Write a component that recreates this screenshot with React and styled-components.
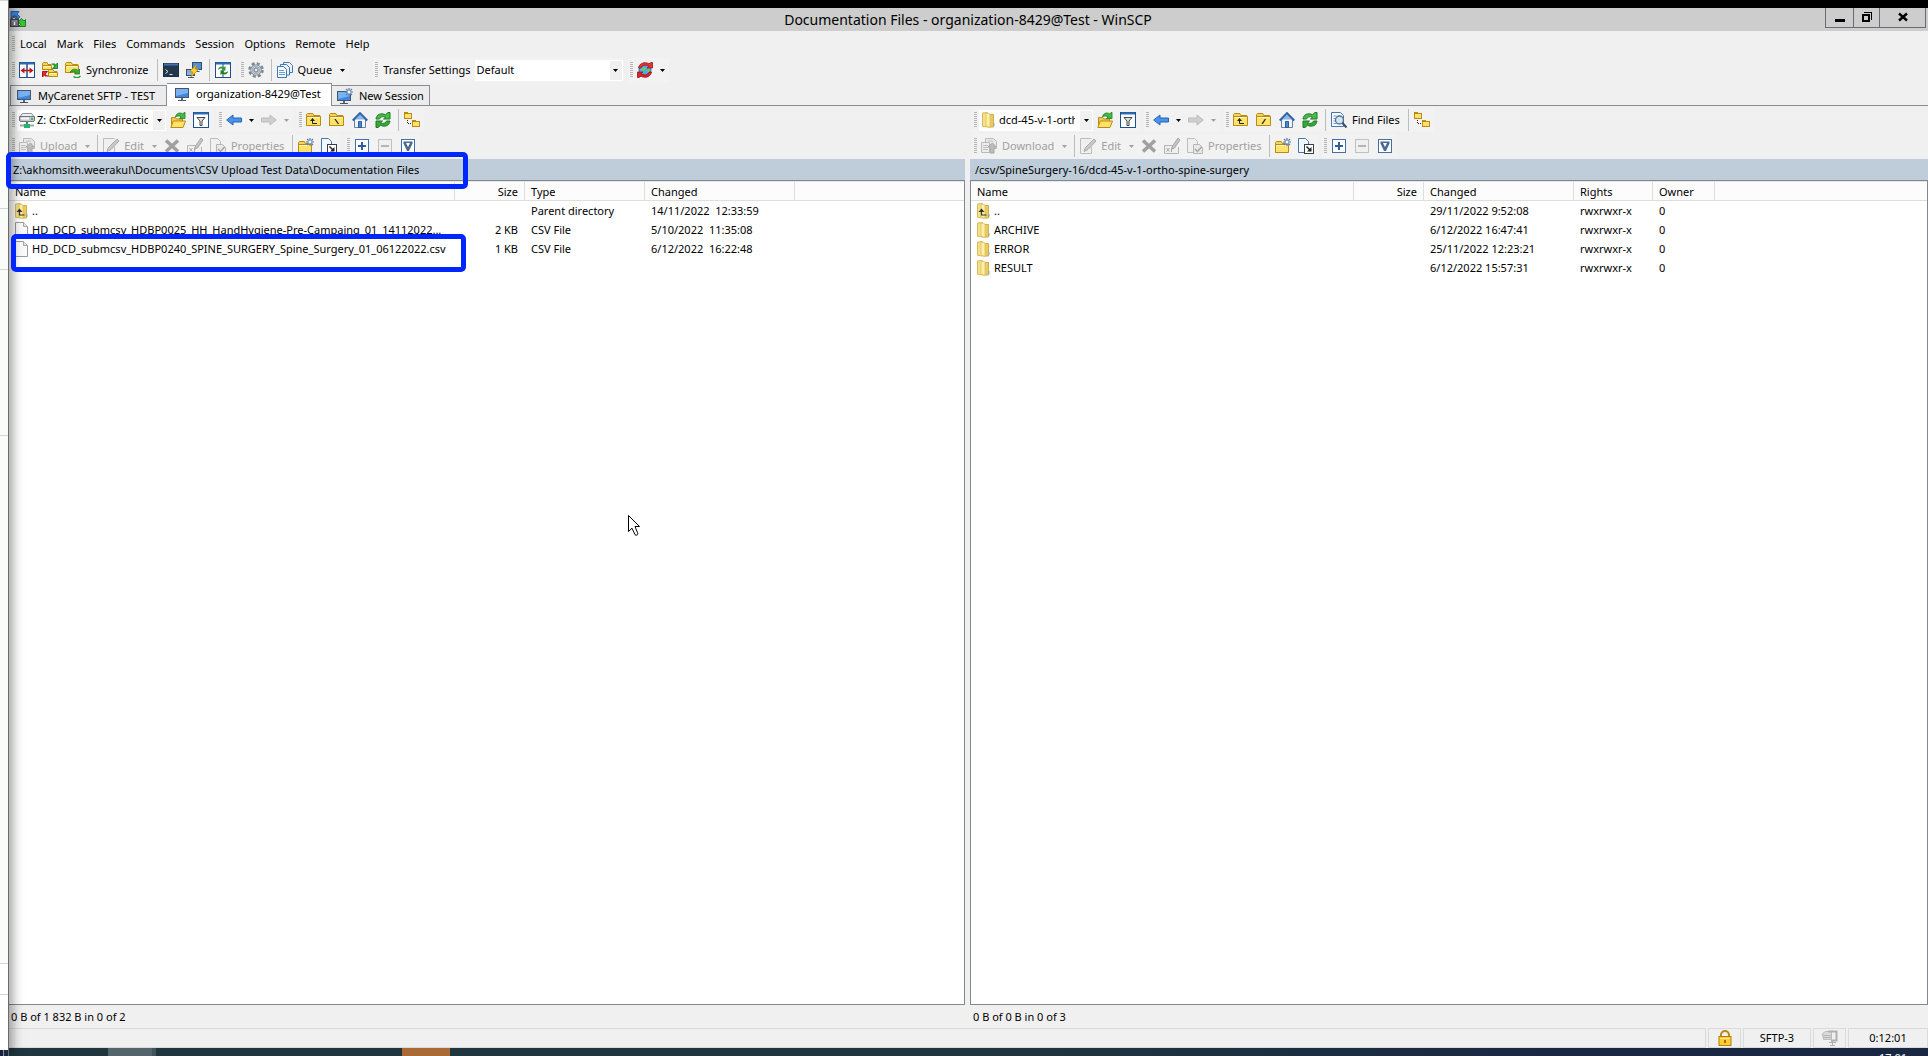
import styled, { createGlobalStyle } from "styled-components";

const GlobalStyle = createGlobalStyle`
  * {
    box-sizing: border-box;
  }
  html, body, #root {
    height: 100%;
  }
  body {
    margin: 0;
    overflow: hidden;
    background: #f0f0f0;
    color: #000;
    font-family: "Noto Sans", "Open Sans", sans-serif;
    font-size: 11px;
    line-height: 16px;
  }
  button, select {
    font: inherit;
    color: inherit;
  }
`;

/* ---------- icons ---------- */

const Svg = styled.svg`
  display: block;
  flex: none;
  width: 16px;
  height: 16px;
`;

const Icon = ({ children, crisp }) => (
  <Svg viewBox="0 0 16 16" fill="none" aria-hidden="true" shapeRendering={crisp ? "crispEdges" : "auto"}>
    {children}
  </Svg>
);

const MiniFolder = ({ x = 0, y = 0, w = 15, h = 12 }) => (
  <g transform={`translate(${x} ${y})`}>
    <path d={`M.5 1.500l1-1h${w * 0.35}l1 2h${w * 0.6 - 3}v${h - 3}h-${w - 1.5}z`} fill="#f5d657" stroke="#b98a16" />
    <path d={`M.5 3.500h${w - 1}v${h - 4}h-${w - 1}z`} fill="#ffe26a" stroke="#b98a16" />
    <path d={`M1.500 4.500h${w - 3}`} stroke="#fff6c4" />
  </g>
);

const AppIcon = () => (
  <Icon>
    <path d="M1 .5h8L7 3l3 3-3 3-3-3-3 2z" fill="#3f8ae8" stroke="#1c5cb4" />
    <path d="M15.500 15.500h-7l2-2-2-3 3-3 2.500 2.500 1.500-1.500z" fill="#3fc03a" stroke="#1d8420" />
    <path d="M2 9V7.500a2.500 2.500 0 0 1 5 0V9" stroke="#555" strokeWidth="1.500" />
    <rect x=".5" y="8.500" width="8" height="7" fill="#6d747c" stroke="#3d4248" />
    <path d="M2 10h5" stroke="#aeb4ba" />
    <path d="M4.500 11v3" stroke="#fff" strokeWidth="1.500" />
  </Icon>
);

const PanelsIcon = () => (
  <Icon>
    <rect x=".5" y=".5" width="15" height="15" fill="#fff" stroke="#1f4e8f" />
    <path d="M1 1.500h14" stroke="#2e6cb8" strokeWidth="2" />
    <path d="M8 2v13" stroke="#1f4e8f" strokeWidth="1.500" />
    <path d="M3 8.500h10" stroke="#c01818" strokeWidth="1.600" />
    <path d="M1.500 8.500l4-3v6zM14.500 8.500l-4-3v6z" fill="#c01818" />
  </Icon>
);

const SyncBrowseIcon = () => (
  <Icon>
    <MiniFolder w={10} h={8} />
    <MiniFolder x={6} y={7} w={10} h={8} />
    <path d="M9.500 2h3.500v2.500M15.500 1v5.500h-5z" stroke="#1f8a25" fill="#3fb543" />
    <path d="M6 14H3v-2M.5 15V9.500h5z" stroke="#b31515" fill="#e03030" />
  </Icon>
);

const SynchronizeIcon = () => (
  <Icon>
    <MiniFolder w={14} h={11} />
    <path d="M5 10.500c1-3 5-4.500 8-2l1.500-1.500v5h-5l1.700-1.700c-1.700-1.300-4-1-6.200.2z" fill="#3cae3c" stroke="#187a20" strokeWidth=".8" />
    <path d="M15.500 14c-2 2-5 2-7 .5" stroke="#2b9a2f" strokeWidth="1.500" />
  </Icon>
);

const TerminalIcon = () => (
  <Icon>
    <rect x=".5" y="1.500" width="15" height="13" fill="#24384c" stroke="#1d3047" />
    <path d="M1 2.500h14" stroke="#3b73b5" strokeWidth="2" />
    <path d="M2.500 7.500l2.500 2-2.500 2M6.500 12.500h3" stroke="#dfe7ee" />
  </Icon>
);

const PuttyIcon = () => (
  <Icon>
    <rect x="6.500" y=".5" width="9" height="7" fill="#4a90e0" stroke="#3b4b63" />
    <path d="M8.500 9.500h5" stroke="#555" />
    <rect x=".5" y="7.500" width="8" height="6" fill="#7fb2ec" stroke="#3b4b63" />
    <path d="M2 15.500h6" stroke="#555" />
    <path d="M11 2.500L3.500 9.500 7 10l-2 5 7.500-7.500-3.500-.5z" fill="#ffd52e" stroke="#c58a0c" strokeWidth=".8" />
  </Icon>
);

const RefreshPanelsIcon = () => (
  <Icon>
    <rect x=".5" y=".5" width="15" height="15" fill="#fff" stroke="#1f4e8f" />
    <path d="M1 1.500h14" stroke="#2e6cb8" strokeWidth="2" />
    <path d="M8 2v13" stroke="#1f4e8f" />
    <path d="M3 8c0-3 3.500-4.500 6-2.800L10.500 4v4.500H6.500L7.700 7C6.500 6 4.500 6.500 3 8z" fill="#2f9e35" />
    <path d="M13 9c0 3-3.500 4.500-6 2.800L5.500 13V8.500h4L8.300 10c1.200 1 3.200.5 4.700-1z" fill="#207a28" />
  </Icon>
);

const GearIcon = () => (
  <Icon>
    <circle cx="8" cy="8" r="6.500" stroke="#7d8894" strokeWidth="2.600" strokeDasharray="3 2.100" />
    <circle cx="8" cy="8" r="4.500" fill="#c4ccd4" stroke="#8d98a4" strokeWidth="2.400" />
    <circle cx="8" cy="8" r="4.300" stroke="#c9d1d9" />
    <circle cx="8" cy="8" r="2" fill="#f0f0f0" stroke="#6b7682" />
  </Icon>
);

const QueueIcon = () => (
  <Icon>
    <path d="M6.500.5h6l3 3v7h-9z" fill="#eaf3fc" stroke="#4178b0" />
    <path d="M3.500 2.500h6l3 3v7.500h-9z" fill="#eaf3fc" stroke="#4178b0" />
    <path d="M.5 4.500h6l3 3v8H.5z" fill="#f4f9ff" stroke="#4178b0" />
    <path d="M2 8.500h5M2 10.500h6M2 12.500h6" stroke="#6f9ccb" />
  </Icon>
);

const GlobeIcon = () => (
  <Icon>
    <circle cx="8" cy="8" r="6" fill="#58a6ea" stroke="#2d6fb4" />
    <path d="M5 6l3-1 1 2-3 2-2-1zM10 8l3-2v4l-2 1z" fill="#6ccc58" />
    <path d="M1.500 6C2 2 7-1 12 1.800L14 .5h1.500V6H10l1.800-1.800C8 2 5 3.500 4 6z" fill="#e03434" stroke="#991414" strokeWidth=".8" />
    <path d="M14.500 10c-.5 4-5.500 7-10.500 4.200L2 15.500H.5V10H6l-1.800 1.800C8 14 11 12.500 12 10z" fill="#d32626" stroke="#991414" strokeWidth=".8" />
  </Icon>
);

const Monitor = () => (
  <>
    <rect x="1.500" y="2.500" width="13" height="9" fill="#3f86dc" stroke="#44566e" />
    <path d="M2 3h12v4L2 10z" fill="#79b2f2" />
    <path d="M7 12h2v2H7z" fill="#59667a" />
    <path d="M4 14.500h8" stroke="#44566e" />
  </>
);

const MonitorIcon = () => (
  <Icon>
    <Monitor />
  </Icon>
);

const Spark = ({ x = 8, y = 0 }) => (
  <g transform={`translate(${x} ${y})`}>
    <path d="M4 0v8M0 4h8M1 1l6 6M7 1L1 7" stroke="#5b7fa8" strokeWidth="1.200" />
    <circle cx="4" cy="4" r="2" fill="#fff" stroke="#6f93bc" />
  </g>
);

const NewMonitorIcon = () => (
  <Icon>
    <g transform="translate(-1 1)">
      <Monitor />
    </g>
    <Spark />
  </Icon>
);

const DriveIcon = () => (
  <Icon>
    <path d="M1.500 4l2-2.500h9l2 2.500v4h-13z" fill="#eceeef" stroke="#8c9298" />
    <path d="M.5 4.500h15V8q0 1.500-1.500 1.500H2Q.5 9.500.5 8z" fill="#c3c7cb" stroke="#70767c" />
    <path d="M2 6.500h8" stroke="#f8f8f8" strokeWidth="2" />
    <rect x="12" y="6" width="2" height="2" fill="#35c24b" />
    <path d="M7 10h2v2H7z" fill="#1d9a5a" />
    <path d="M1 13.500h14" stroke="#a0a6ac" strokeWidth="2" />
    <rect x="5" y="12" width="6" height="4" fill="#27b36d" />
  </Icon>
);

const OpenFolderIcon = () => (
  <Icon>
    <path d="M1.500 14V5.500h4l1 1.500h6v3" fill="#f2cc48" stroke="#b98a16" />
    <path d="M.8 15.500l2.500-6.500h12.200L13 15.500z" fill="#ffe26a" stroke="#b98a16" />
    <path d="M5.500 5C6 1.500 9.500 0 12.500 1.700L15 .3V6.500H9.500l1.700-1.600C9.500 3.600 7 3.800 5.500 5z" fill="#46b846" stroke="#1c7f24" strokeWidth=".8" />
  </Icon>
);

const FilterIcon = () => (
  <Icon>
    <rect x=".5" y=".5" width="15" height="15" fill="#fff" stroke="#1f4e8f" />
    <path d="M1 1.500h14" stroke="#2e6cb8" strokeWidth="2" />
    <path d="M4 5.500h8l-3 3.500v4.500H7V9z" fill="#e4e4e4" stroke="#444" />
  </Icon>
);

const ArrowIcon = ({ off }) => (
  <Icon>
    <path
      transform={off ? "translate(16 0) scale(-1 1)" : undefined}
      d="M.7 8L7 3v3h8.500v4H7v3z"
      fill={off ? "#cfcfcf" : "#4a93ec"}
      stroke={off ? "#bdbdbd" : "#2563b8"}
    />
  </Icon>
);

const FolderMarkIcon = ({ mark }) => (
  <Icon>
    <MiniFolder y={1} w={15} h={13} />
    {mark === "up" && <path d="M6.500 7v4.500H11" stroke="#222" />}
    {mark === "up" && <path d="M4 9l2.500-3L9 9z" fill="#222" />}
    {mark === "back" && <path d="M6 7l3.500 5" stroke="#222" strokeWidth="1.300" />}
    {mark === "slash" && <path d="M9.500 7L6 12" stroke="#222" strokeWidth="1.300" />}
  </Icon>
);

const HomeIcon = () => (
  <Icon>
    <path d="M2.500 8v7.500h11V8L8 2.500z" fill="#f1f5fa" stroke="#6a7f9c" />
    <path d="M8 2.500L3 7.500h10z" fill="#8db6e6" />
    <path d="M.7 8.500L8 1l7.300 7.500" stroke="#2e62a8" strokeWidth="1.800" />
    <path d="M6.500 9.500h3v6h-3z" fill="#4b88d0" stroke="#2d5f9e" />
  </Icon>
);

const RefreshIcon = () => (
  <Icon>
    <path d="M1 7C1.500 2.500 6 .5 10.500 2.700L13 .5h2V7H8.500l2-1.800C8 4 5.500 4.500 4.500 7z" fill="#4cbc48" stroke="#1b7d24" />
    <path d="M15 9c-.5 4.500-5 6.500-9.500 4.300L3 15.500H1V9h6.500l-2 1.800c2.500 1.200 5 .7 6-1.800z" fill="#3aa63a" stroke="#1b7d24" />
  </Icon>
);

const TreeIcon = () => (
  <Icon crisp>
    <rect x="0" y="0" width="4" height="2" fill="#b98a16" />
    <rect x=".5" y="1.500" width="7" height="5" fill="#ffe26a" stroke="#b98a16" />
    <path d="M3.500 8v4M4 11.500h4" stroke="#222" strokeDasharray="1 1" />
    <rect x="8" y="8" width="4" height="2" fill="#b98a16" />
    <rect x="8.500" y="9.500" width="7" height="5" fill="#ffe26a" stroke="#b98a16" />
  </Icon>
);

const FindIcon = () => (
  <Icon>
    <path d="M.5.500h9l3 3v11H.5z" fill="#f5f9ff" stroke="#4178b0" />
    <path d="M2.500 4h3M2.500 6.500h2M2.500 9h2M2.500 11.500h3" stroke="#6f9ccb" />
    <circle cx="8.500" cy="8" r="4" fill="#cfe6fb" stroke="#5b6f86" strokeWidth="1.300" />
    <path d="M11.500 11l4 4.500" stroke="#3b4b63" strokeWidth="2" />
  </Icon>
);

const TransferIcon = () => (
  <Icon>
    <path d="M4.500.5h8l3 3v7h-11z" fill="#e9e9e9" stroke="#b9b9b9" />
    <path d="M.5 4.500h8v10h-8z" fill="#eee" stroke="#bababa" />
    <path d="M2 7.500h5M2 9.500h5M2 11.500h5M7 3h5" stroke="#bdbdbd" />
    <path d="M9 15V9H7l4.500-4L15 9h-2v6z" fill="#bcbcbc" stroke="#a6a6a6" />
  </Icon>
);

const EditIcon = () => (
  <Icon>
    <path d="M11.500 9v6.500H.5V.5h11" fill="#f0f0f0" stroke="#bcbcbc" />
    <path d="M14 1l2 2-8 8.500-4 2 1.500-4z" fill="#c9c9c9" stroke="#a9a9a9" />
  </Icon>
);

const DeleteIcon = () => (
  <Icon>
    <path d="M2 2.500l12 11M14 2.500l-12 11" stroke="#a0a0a0" strokeWidth="3.600" />
  </Icon>
);

const RenameIcon = () => (
  <Icon>
    <path d="M9 7.500H.5v8h14V9" fill="#f0f0f0" stroke="#b5b5b5" />
    <path d="M2.500 10l3 3.500M5.500 10l-3 3.500M7.500 9.500v4.500" stroke="#a5a5a5" />
    <path d="M14 0l2 2-5.500 8-2.500 1 .5-3z" fill="#c4c4c4" stroke="#a9a9a9" />
  </Icon>
);

const PropertiesIcon = () => (
  <Icon>
    <path d="M.5.500h7l3 3v11H.5z" fill="#f0f0f0" stroke="#bdbdbd" />
    <path d="M6.500 6.500h6l3 3v6h-9z" fill="#e8e8e8" stroke="#b5b5b5" />
    <path d="M8 11l2.500 2.500 4-4.500" stroke="#a5a5a5" strokeWidth="1.500" />
  </Icon>
);

const NewFolderIcon = () => (
  <Icon>
    <MiniFolder y={3} w={14} h={12} />
    <Spark />
  </Icon>
);

const NewLinkIcon = () => (
  <Icon>
    <path d="M.5.500h7l3 3v11H.5z" fill="#f5f9ff" stroke="#4178b0" />
    <rect x="6.500" y="6.500" width="9" height="9" fill="#fff" stroke="#333f4d" />
    <path d="M8.500 8.500l4 4" stroke="#222" strokeWidth="1.500" />
    <path d="M13.500 9v4.500H9z" fill="#222" />
  </Icon>
);

const SelectMarkIcon = ({ mark }) => (
  <Icon>
    <rect x="1.500" y="1.500" width="13" height="13" fill={mark === "minus" ? "#f0f0f0" : "#fff"} stroke={mark === "minus" ? "#c0c0c0" : "#4370a4"} />
    {mark === "plus" && <path d="M4 8h8M8 4v8" stroke="#2f5f9a" strokeWidth="2" />}
    {mark === "minus" && <path d="M4 8h8" stroke="#b5b5b5" strokeWidth="2" />}
    {mark === "invert" && <path d="M3.500 3.500h9v2L9 13H7L3.500 5.500z" fill="#4a6a90" />}
    {mark === "invert" && <path d="M6 5h4L8 9z" fill="#fff" />}
  </Icon>
);

const ListFolderIcon = ({ up }) => (
  <Icon>
    <path d="M1.500 1l5-.5V15l-5-.7z" fill="#f3e08c" stroke="#d9bb55" />
    <path d="M6.500 2.500h6v12.500h-6z" fill="#e9cb62" stroke="#d3ae45" />
    <path d="M5 1l4 1v13.500L5 14z" fill="#fff0a8" stroke="#dcbf5e" strokeWidth=".8" />
    <path d="M13 11v3" stroke="#6db3e6" />
    {up && <path d="M5.500 7v5h5" stroke="#333" strokeWidth="1.200" />}
    {up && <path d="M2.500 9l3-3.500 3 3.500z" fill="#333" />}
  </Icon>
);

const FileIcon = () => (
  <Icon>
    <path d="M1.500.5h8l4 4v11h-12z" fill="#fafafa" stroke="#9a9a9a" />
    <path d="M9.500.5v4h4" fill="#e6e6e6" stroke="#a5a5a5" />
  </Icon>
);

const LockIcon = () => (
  <Icon>
    <path d="M4 8V5a4 4 0 0 1 8 0v3" stroke="#b98a16" strokeWidth="2" />
    <rect x="2" y="6.500" width="12" height="9" fill="#ffcb2e" stroke="#b27d0c" />
    <path d="M3 8.500h10" stroke="#ffe995" />
    <path d="M8 10v3" stroke="#7c5500" strokeWidth="1.500" />
  </Icon>
);

const CompressIcon = () => (
  <Icon>
    <path d="M.5 3.500l3-2h6v8H1.500z" fill="#dadada" stroke="#bcbcbc" />
    <path d="M1 5.500h8M1 7.500h8" stroke="#b4b4b4" />
    <path d="M6 1.500h8.500v9H10v2" stroke="#b0b0b0" strokeWidth="2" />
    <path d="M7 12.500h7M8 15.500h5M10.500 12v4" stroke="#b0b0b0" />
  </Icon>
);

/* ---------- desktop and window ---------- */

const Desktop = styled.div`
  position: relative;
  display: grid;
  grid-template-columns: 8px minmax(0, 1fr);
  height: 100vh;
`;

const BackWindow = styled.aside`
  z-index: 1;
  display: flex;
  flex-direction: column;
  background: #fafcf9;
  box-shadow: 1px 0 0 #6a6a6a, 3px 0 12px rgba(0, 0, 0, 0.55);
`;

const BackRow = styled.div`
  flex: ${(p) => p.$grow || "none"};
  height: ${(p) => p.$height || "auto"};
  border-top: 1px solid #d4d6d4;
  background: ${(p) => p.$bg || "transparent"};
`;

const BackTaskbar = styled.div`
  height: 6px;
  border-right: 4px solid #1c2743;
  background: linear-gradient(90deg, #16203a 3px, #8b93a5 3px);
`;

const Screen = styled.div`
  display: flex;
  flex-direction: column;
  min-width: 0;
  border-top: 8px solid #000;
`;

const TitleBar = styled.header`
  display: grid;
  grid-template-columns: 1fr auto 1fr;
  flex: none;
  height: 23px;
  padding: 0 2px;
  background: #cdcdcd;
`;

const AppMark = styled.div`
  padding-top: 3px;
`;

const Title = styled.h1`
  margin: 0;
  font-size: 14px;
  font-weight: 400;
  line-height: 23px;
`;

const WindowButtons = styled.div`
  display: flex;
  justify-content: flex-end;
  align-items: flex-start;
`;

const WindowButton = styled.button`
  display: grid;
  place-items: center;
  width: ${(p) => p.$width}px;
  height: 20px;
  margin-left: -1px;
  padding: 0 0 2px;
  border: 1px solid #6a6a70;
  border-top: 0;
  background: none;
`;

const MenuBar = styled.nav`
  display: flex;
  align-items: center;
  flex: none;
  height: 26px;
  padding-left: 4px;
`;

const Grip = styled.span`
  flex: none;
  width: 3px;
  height: 16px;
  margin-right: ${(p) => p.$gap || 0}px;
  background: repeating-linear-gradient(#b4b4b4 0 1px, transparent 1px 2px);
`;

const MenuItem = styled.button`
  padding: 0 5px;
  border: 0;
  background: none;
`;

const BandRow = styled.div`
  display: flex;
  align-items: center;
  flex: none;
  gap: 4px;
  height: 26px;
  padding-left: 2px;
`;

const Band = styled.div`
  display: flex;
  align-items: center;
  flex: none;
  height: 24px;
  margin-left: ${(p) => p.$before || 0}px;
  padding: 0 1px 0 2px;
  background: #f2f2f2;
`;

const ToolButton = styled.button`
  display: flex;
  align-items: center;
  flex: none;
  gap: 5px;
  height: 22px;
  width: ${(p) => (p.$icon ? "23px" : "auto")};
  padding: 0 4px;
  border: 0;
  background: none;
  color: ${(p) => (p.disabled ? "#a0a0a0" : "#000")};
  white-space: nowrap;
`;

const DropButton = styled.button`
  flex: none;
  height: 22px;
  padding: 0 3px 0 4px;
  border: 0;
  background: none;
  color: ${(p) => (p.disabled ? "#a0a0a0" : "#000")};
`;

const Divider = styled.span`
  flex: none;
  width: 1px;
  height: 22px;
  margin: 0 1px 0 4px;
  background: #bdbdbd;
`;

const Combo = styled.div`
  display: flex;
  align-items: center;
  flex: none;
  gap: 2px;
  width: ${(p) => p.$width}px;
  height: 21px;
  padding: 1px 1px 1px 2px;
  background: #fff;
`;

const Picker = styled.select`
  flex: 1;
  min-width: 0;
  height: 19px;
  margin-right: 3px;
  padding: 0;
  border: 0;
  outline: 0;
  appearance: none;
  background: none;
`;

const ComboArrow = styled.span`
  display: grid;
  place-items: center;
  align-self: stretch;
  width: 12px;
  background: #f0f0f0;
  pointer-events: none;
`;

const CaretSvg = styled.svg`
  display: block;
  width: 5px;
  height: 3px;
`;

const Caret = () => (
  <CaretSvg viewBox="0 0 5 3" aria-hidden="true">
    <path d="M0 0h5L2.500 3z" fill="currentColor" />
  </CaretSvg>
);

const FieldLabel = styled.label`
  margin-right: 4px;
`;

const Tabs = styled.div`
  display: flex;
  align-items: flex-end;
  flex: none;
  height: 23px;
  padding-left: 2px;
  border-bottom: 1px solid #8a8c94;
`;

const Tab = styled.button`
  display: flex;
  align-items: center;
  gap: 6px;
  width: ${(p) => p.$width}px;
  height: ${(p) => (p.$active ? 23 : 20)}px;
  margin: 0 0 ${(p) => (p.$active ? -1 : 0)}px;
  padding: 0 4px ${(p) => (p.$active ? 2 : 0)}px ${(p) => (p.$active ? 7 : 5)}px;
  border: 1px solid #8a8c94;
  border-bottom: 0;
  border-left-width: ${(p) => (p.$first ? 1 : 0)}px;
  background: ${(p) => (p.$active ? "#fff" : "#ececec")};
  white-space: nowrap;
`;

const Panes = styled.main`
  display: grid;
  grid-template-columns: minmax(0, 957fr) 5px minmax(0, 958fr);
  flex: 1;
  min-height: 0;
`;

const Pane = styled.section`
  display: flex;
  flex-direction: column;
  grid-column: ${(p) => p.$column};
  min-width: 0;
  padding-top: 1px;
`;

const PathBar = styled.div`
  flex: none;
  height: 21px;
  padding: 0 5px;
  background: #bfcddb;
  line-height: 22px;
  white-space: nowrap;
`;

const ListBox = styled.div`
  flex: 1;
  min-height: 0;
  overflow: hidden;
  border: 1px solid #828790;
  background: #fff;
`;

const FileTable = styled.table`
  width: 100%;
  table-layout: fixed;
  border-collapse: separate;
  border-spacing: 0;
`;

const Head = styled.th`
  width: ${(p) => (p.$width ? `${p.$width}px` : "auto")};
  height: 20px;
  padding: 2px 6px 0;
  border-top: 1px solid #e6e6e6;
  border-bottom: 1px solid #dedede;
  border-right: ${(p) => (p.$width ? "1px solid #dedede" : "0")};
  background: #fcfcfc;
  font-weight: 400;
  text-align: ${(p) => p.$align || "left"};
`;

const Cell = styled.td`
  height: 19px;
  padding: 0 ${(p) => (p.$align ? 7 : 6)}px;
  overflow: hidden;
  text-align: ${(p) => p.$align || "left"};
  white-space: pre;
`;

const FileName = styled.span`
  display: flex;
  align-items: center;
  gap: 2px;
  margin-left: -1px;
`;

const Summary = styled.div`
  flex: none;
  height: 23px;
  padding-left: 3px;
  line-height: 24px;
`;

const StatusBar = styled.footer`
  display: flex;
  gap: 2px;
  flex: none;
  height: 20px;
`;

const StatusPanel = styled.div`
  display: flex;
  align-items: center;
  justify-content: center;
  flex: ${(p) => (p.$width ? `0 0 ${p.$width}px` : 1)};
  border: 1px solid #dadada;
`;

const Taskbar = styled.div`
  display: flex;
  flex: none;
  height: 8px;
  overflow: hidden;
  padding-left: 100px;
  background: linear-gradient(90deg, #20363e 50%, #1a2742 80%);
`;

const TaskItem = styled.span`
  width: 48px;
  margin-right: ${(p) => p.$after || 0}px;
  border-right: ${(p) => p.$edge || "0"};
  background: ${(p) => p.$color};
`;

const TaskClock = styled.time`
  margin-left: auto;
  padding: 2px 21px 0 0;
  color: #fff;
`;

const Highlight = styled.div`
  position: absolute;
  z-index: 2;
  left: ${(p) => p.$x}px;
  top: ${(p) => p.$y}px;
  width: ${(p) => p.$w}px;
  height: ${(p) => p.$h}px;
  border: 5px solid #0026ff;
  border-radius: 5px;
  pointer-events: none;
`;

const Pointer = styled.svg`
  position: absolute;
  z-index: 2;
  left: 628px;
  top: 515px;
  width: 12px;
  height: 21px;
`;

/* ---------- data ---------- */

const menus = ["Local", "Mark", "Files", "Commands", "Session", "Options", "Remote", "Help"];

const localPane = {
  drive: "Z: CtxFolderRedirection",
  driveIcon: <DriveIcon />,
  comboWidth: 149,
  transfer: "Upload",
  root: "back",
  path: "Z:\\akhomsith.weerakul\\Documents\\CSV Upload Test Data\\Documentation Files",
  summary: "0 B of 1 832 B in 0 of 2",
  columns: [
    { name: "Name", width: 446 },
    { name: "Size", width: 70, align: "right" },
    { name: "Type", width: 120 },
    { name: "Changed", width: 150 },
  ],
  rows: [
    ["..", "", "Parent directory", "14/11/2022  12:33:59"],
    ["HD_DCD_submcsv_HDBP0025_HH_HandHygiene-Pre-Campaing_01_14112022...", "2 KB", "CSV File", "5/10/2022  11:35:08"],
    ["HD_DCD_submcsv_HDBP0240_SPINE_SURGERY_Spine_Surgery_01_06122022.csv", "1 KB", "CSV File", "6/12/2022  16:22:48"],
  ],
};

const remotePane = {
  drive: "dcd-45-v-1-ortho-spine-surgery",
  driveIcon: <ListFolderIcon />,
  comboWidth: 114,
  transfer: "Download",
  root: "slash",
  path: "/csv/SpineSurgery-16/dcd-45-v-1-ortho-spine-surgery",
  summary: "0 B of 0 B in 0 of 3",
  find: true,
  columns: [
    { name: "Name", width: 383 },
    { name: "Size", width: 70, align: "right" },
    { name: "Changed", width: 150 },
    { name: "Rights", width: 79 },
    { name: "Owner", width: 62 },
  ],
  rows: [
    ["..", "", "29/11/2022 9:52:08", "rwxrwxr-x", "0"],
    ["ARCHIVE", "", "6/12/2022 16:47:41", "rwxrwxr-x", "0"],
    ["ERROR", "", "25/11/2022 12:23:21", "rwxrwxr-x", "0"],
    ["RESULT", "", "6/12/2022 15:57:31", "rwxrwxr-x", "0"],
  ],
};

const rowIcon = (name) => {
  if (name === "..") return <ListFolderIcon up />;
  return name.startsWith("HD_") ? <FileIcon /> : <ListFolderIcon />;
};

/* ---------- parts ---------- */

const FilePane = ({ pane, column }) => (
  <Pane $column={column}>
    <BandRow>
      <Band>
        <Grip $gap={2} />
        <Combo $width={pane.comboWidth}>
          {pane.driveIcon}
          <Picker aria-label={`${pane.transfer} location`}>
            <option>{pane.drive}</option>
          </Picker>
          <ComboArrow>
            <Caret />
          </ComboArrow>
        </Combo>
        <ToolButton $icon aria-label="Open directory"><OpenFolderIcon /></ToolButton>
        <ToolButton $icon aria-label="Filter"><FilterIcon /></ToolButton>
      </Band>
      <Band>
        <Grip />
        <ToolButton $icon aria-label="Back"><ArrowIcon /></ToolButton>
        <DropButton aria-label="Back history"><Caret /></DropButton>
        <ToolButton $icon aria-label="Forward" disabled><ArrowIcon off /></ToolButton>
        <DropButton aria-label="Forward history" disabled><Caret /></DropButton>
      </Band>
      <Band>
        <Grip />
        <ToolButton $icon aria-label="Parent directory"><FolderMarkIcon mark="up" /></ToolButton>
        <ToolButton $icon aria-label="Root directory"><FolderMarkIcon mark={pane.root} /></ToolButton>
        <ToolButton $icon aria-label="Home directory"><HomeIcon /></ToolButton>
        <ToolButton $icon aria-label="Refresh"><RefreshIcon /></ToolButton>
        <Divider />
        {pane.find && (
          <>
            <ToolButton><FindIcon />Find Files</ToolButton>
            <Divider />
          </>
        )}
        <ToolButton $icon aria-label="Tree"><TreeIcon /></ToolButton>
      </Band>
    </BandRow>
    <BandRow>
      <Band>
        <Grip />
        <ToolButton disabled><TransferIcon />{pane.transfer}</ToolButton>
        <DropButton aria-label="Transfer options" disabled><Caret /></DropButton>
        <Divider />
        <ToolButton disabled><EditIcon />Edit</ToolButton>
        <DropButton aria-label="Edit options" disabled><Caret /></DropButton>
        <ToolButton $icon aria-label="Delete" disabled><DeleteIcon /></ToolButton>
        <ToolButton $icon aria-label="Rename" disabled><RenameIcon /></ToolButton>
        <ToolButton disabled><PropertiesIcon />Properties</ToolButton>
        <Divider />
        <ToolButton $icon aria-label="New directory"><NewFolderIcon /></ToolButton>
        <ToolButton $icon aria-label="New link"><NewLinkIcon /></ToolButton>
      </Band>
      <Band>
        <Grip />
        <ToolButton $icon aria-label="Select files"><SelectMarkIcon mark="plus" /></ToolButton>
        <ToolButton $icon aria-label="Unselect files" disabled><SelectMarkIcon mark="minus" /></ToolButton>
        <ToolButton $icon aria-label="Invert selection"><SelectMarkIcon mark="invert" /></ToolButton>
      </Band>
    </BandRow>
    <PathBar>{pane.path}</PathBar>
    <ListBox>
      <FileTable>
        <thead>
          <tr>
            {pane.columns.map((col) => (
              <Head key={col.name} scope="col" $width={col.width} $align={col.align}>
                {col.name}
              </Head>
            ))}
            <Head as="td" />
          </tr>
        </thead>
        <tbody>
          {pane.rows.map((row) => (
            <tr key={row[0]}>
              {row.map((value, i) => (
                <Cell key={pane.columns[i].name} $align={pane.columns[i].align}>
                  {i === 0 ? <FileName>{rowIcon(value)}{value}</FileName> : value}
                </Cell>
              ))}
            </tr>
          ))}
        </tbody>
      </FileTable>
    </ListBox>
    <Summary>{pane.summary}</Summary>
  </Pane>
);

const MainToolbar = () => (
  <BandRow>
    <Band>
      <Grip />
      <ToolButton $icon aria-label="Compare directories"><PanelsIcon /></ToolButton>
      <ToolButton $icon aria-label="Synchronize browsing"><SyncBrowseIcon /></ToolButton>
      <ToolButton><SynchronizeIcon />Synchronize</ToolButton>
      <Divider />
      <ToolButton $icon aria-label="Console"><TerminalIcon /></ToolButton>
      <ToolButton $icon aria-label="Open in PuTTY"><PuttyIcon /></ToolButton>
      <Divider />
      <ToolButton $icon aria-label="Keep remote directory up to date"><RefreshPanelsIcon /></ToolButton>
    </Band>
    <Band>
      <Grip />
      <ToolButton $icon aria-label="Preferences"><GearIcon /></ToolButton>
      <Divider />
      <ToolButton><QueueIcon />Queue</ToolButton>
      <DropButton aria-label="Queue options"><Caret /></DropButton>
    </Band>
    <Band $before={20}>
      <Grip $gap={5} />
      <FieldLabel htmlFor="transfer-settings">Transfer Settings</FieldLabel>
      <Combo $width={148}>
        <Picker id="transfer-settings">
          <option>Default</option>
        </Picker>
        <ComboArrow>
          <Caret />
        </ComboArrow>
      </Combo>
    </Band>
    <Band>
      <Grip />
      <ToolButton $icon aria-label="Reconnect session"><GlobeIcon /></ToolButton>
      <DropButton aria-label="Reconnect options"><Caret /></DropButton>
    </Band>
  </BandRow>
);

const App = () => {
  return (
    <>
      <GlobalStyle />
      <Desktop>
        <BackWindow>
          <BackRow $height="208px" />
          <BackRow $height="61px" />
          <BackRow $height="166px" />
          <BackRow $grow={1} />
          <BackRow $height="31px" $bg="#fff" />
          <BackRow $height="56px" $bg="#fff" />
          <BackTaskbar />
        </BackWindow>

        <Screen>
          <TitleBar>
            <AppMark>
              <AppIcon />
            </AppMark>
            <Title>Documentation Files - organization-8429@Test - WinSCP</Title>
            <WindowButtons>
              <WindowButton $width={29} aria-label="Minimize">
                <Icon crisp><path d="M3 10h10v3H3z" fill="#000" /></Icon>
              </WindowButton>
              <WindowButton $width={27} aria-label="Restore">
                <Icon crisp>
                  <path d="M4 6h6v6H4z" stroke="#000" strokeWidth="2" />
                  <path d="M5 3.500h7.500V11" stroke="#000" />
                </Icon>
              </WindowButton>
              <WindowButton $width={47} aria-label="Close">
                <Icon><path d="M4 4.500l8 7M12 4.500l-8 7" stroke="#000" strokeWidth="2.400" /></Icon>
              </WindowButton>
            </WindowButtons>
          </TitleBar>

          <MenuBar>
            <Grip />
            {menus.map((menu) => (
              <MenuItem key={menu}>{menu}</MenuItem>
            ))}
          </MenuBar>
          <MainToolbar />

          <Tabs role="tablist">
            <Tab role="tab" $first $width={157}><MonitorIcon />MyCarenet SFTP - TEST</Tab>
            <Tab role="tab" $active aria-selected $width={165}><MonitorIcon />organization-8429@Test</Tab>
            <Tab role="tab" $width={98}><NewMonitorIcon />New Session</Tab>
          </Tabs>

          <Panes>
            <FilePane pane={localPane} column={1} />
            <FilePane pane={remotePane} column={3} />
          </Panes>

          <StatusBar>
            <StatusPanel />
            <StatusPanel $width={33}><LockIcon /></StatusPanel>
            <StatusPanel $width={68}>SFTP-3</StatusPanel>
            <StatusPanel $width={33}><CompressIcon /></StatusPanel>
            <StatusPanel $width={80}>0:12:01</StatusPanel>
          </StatusBar>
          <Taskbar>
            <TaskItem $after={246} $color="#53656a" $edge="4px solid #42545a" />
            <TaskItem $color="#a96a35" />
            <TaskClock>17:01</TaskClock>
          </Taskbar>
        </Screen>

        <Highlight $x={6} $y={152} $w={462} $h={37} />
        <Highlight $x={11} $y={234} $w={455} $h={38} />
        <Pointer viewBox="0 0 12 21" aria-hidden="true">
          <path d="M.5.500v16l3.500-3.300 3 6.500q1 1.300 2.500 0 .7-.7 0-2L7 11.500h4.500z" fill="#fff" stroke="#000" />
        </Pointer>
      </Desktop>
    </>
  );
};

export default App;
